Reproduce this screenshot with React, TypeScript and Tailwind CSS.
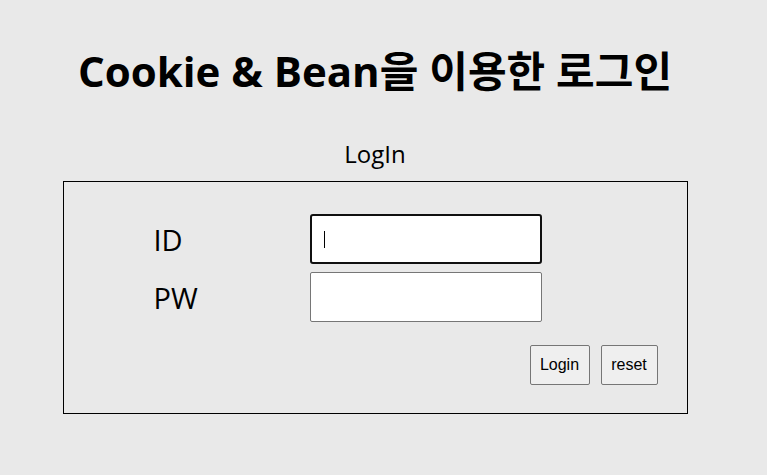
export default function App() {
  return (
    <div className="min-h-[475px] w-full bg-[#e9e9e9] font-['Open_Sans','Noto_Sans_CJK_KR',sans-serif] text-black">
      <div className="w-[750px] flex flex-col items-center">
        <h1 className="mt-[42px] text-[42px] leading-[58px] font-bold">Cookie &amp; Bean을 이용한 로그인</h1>
        <div className="mt-[39px] text-[24px] leading-[30px]">LogIn</div>
        <div className="mt-[12px] w-[625px] h-[233px] border border-black pt-[32px] pl-[90px] pr-[29px]">
          <div className="grid grid-cols-[156px_232px] gap-y-[8px] items-center">
            <div className="text-[29px] leading-none">ID</div>
            <div className="h-[50px] rounded-[3px] border-2 border-[#101010] bg-white flex items-center pl-[12px]">
              <span className="block w-px h-[17px] bg-black" />
            </div>
            <div className="text-[29px] leading-none">PW</div>
            <div className="h-[50px] rounded-[2px] border border-[#767676] bg-white" />
          </div>
          <div className="mt-[23px] flex justify-end gap-[11px] font-['Liberation_Sans',sans-serif] text-[16px]">
            <button className="h-[40px] w-[60px] rounded-[2px] border border-[#767676] bg-[#efefef]">Login</button>
            <button className="h-[40px] w-[57px] rounded-[2px] border border-[#767676] bg-[#efefef]">reset</button>
          </div>
        </div>
      </div>
    </div>
  );
}
